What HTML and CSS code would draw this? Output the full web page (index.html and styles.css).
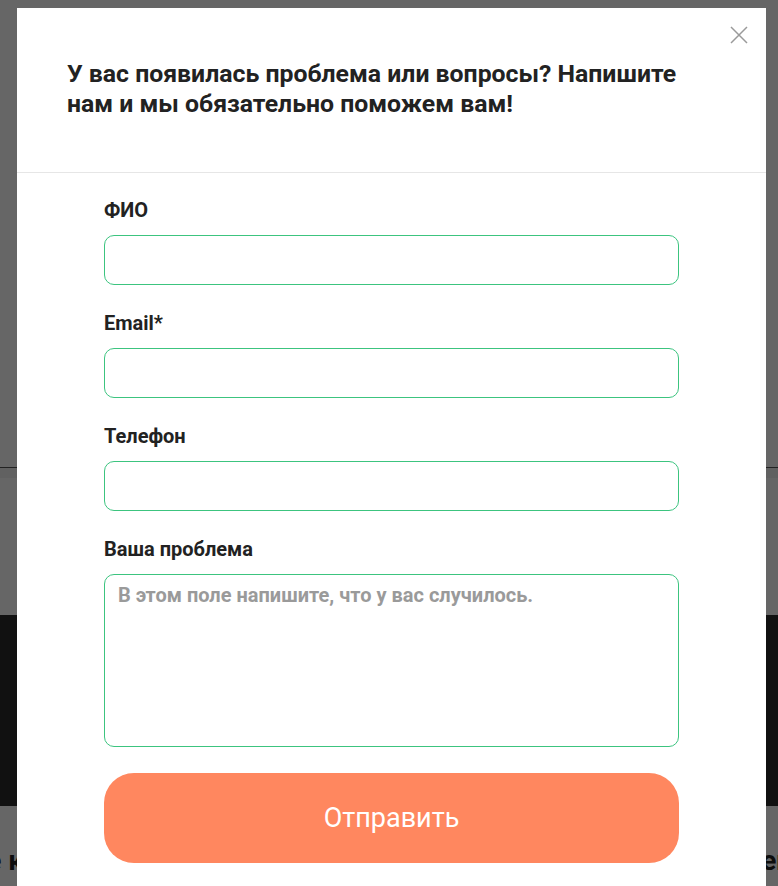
FILE: index.html
```html
<!DOCTYPE html>
<html lang="ru">
<head>
    <meta charset="UTF-8">
    <meta name="viewport" content="width=device-width, initial-scale=1.0">
    <title>Обратная связь</title>
    <link rel="stylesheet" href="styles.css">
</head>
<body>
    <div class="page">
        <div class="page-top"></div>
        <div class="page-strip"></div>
        <div class="page-mid"></div>
        <div class="page-dark"></div>
        <div class="page-bottom">
            <h2 class="page-title">лучшие клиники и специалисты вашего города с отзывами пациентов ил</h2>
        </div>
    </div>

    <div class="overlay"></div>

    <div class="modal">
        <button class="modal-close" aria-label="Закрыть">
            <svg width="18" height="18" viewBox="0 0 18 18">
                <path d="M1 1 L17 17 M17 1 L1 17" stroke="#9a9a9a" stroke-width="1.5" fill="none"/>
            </svg>
        </button>
        <div class="modal-header">
            <h3>У вас появилась проблема или вопросы? Напишите нам и мы обязательно поможем вам!</h3>
        </div>
        <form class="modal-form">
            <label class="field-label" for="fio">ФИО</label>
            <input class="field" type="text" id="fio">

            <label class="field-label" for="email">Email*</label>
            <input class="field" type="email" id="email">

            <label class="field-label" for="phone">Телефон</label>
            <input class="field" type="tel" id="phone">

            <label class="field-label" for="problem">Ваша проблема</label>
            <textarea class="field field-area" id="problem" placeholder="В этом поле напишите, что у вас случилось."></textarea>

            <button class="submit" type="button">Отправить</button>
        </form>
    </div>
</body>
</html>
```

FILE: styles.css
```css
body {
    font-family: Roboto, "Liberation Sans", sans-serif;
    margin: 0;
    background: #fff;
    color: #222;
    overflow: hidden;
}
.page {
    min-height: 100vh;
}
.page-top {
    height: 467px;
    background: #fff;
    border-bottom: 1px solid #555;
}
.page-strip {
    height: 10px;
    background: #f2f2f2;
}
.page-mid {
    height: 137px;
    background: #fff;
}
.page-dark {
    height: 191px;
    background: #2b2b2b;
}
.page-bottom {
    height: 200px;
    background: #fff;
    overflow: hidden;
    display: flex;
    justify-content: center;
}
.page-title {
    flex-shrink: 0;
    margin: 38px 0 0;
    font-size: 28px;
    font-weight: 700;
    white-space: nowrap;
    color: #222;
}
.overlay {
    position: fixed;
    inset: 0;
    background: rgba(0, 0, 0, 0.6);
}
.modal {
    position: absolute;
    top: 8px;
    left: 17px;
    width: 749px;
    background: #fff;
}
.modal-close {
    position: absolute;
    top: 18px;
    right: 18px;
    width: 18px;
    height: 18px;
    padding: 0;
    border: none;
    background: none;
    cursor: pointer;
}
.modal-header {
    padding: 51px 50px 53px;
    border-bottom: 1px solid #e6e6e6;
}
.modal-header h3 {
    margin: 0;
    font-size: 24.8px;
    line-height: 30px;
    font-weight: 700;
    color: #222;
    max-width: 625px;
}
.modal-form {
    display: flex;
    flex-direction: column;
    padding: 25px 87px 40px;
}
.field-label {
    font-size: 20px;
    line-height: 24px;
    font-weight: 700;
    margin-bottom: 13px;
}
.field {
    height: 50px;
    box-sizing: border-box;
    border: 1px solid #3cc47f;
    border-radius: 10px;
    padding: 0 14px;
    margin-bottom: 26px;
    font-family: inherit;
    font-size: 20px;
    outline: none;
}
.field-area {
    height: 173px;
    padding: 8px 13px;
    resize: none;
}
.field-area::placeholder {
    color: #9a9a9a;
    font-weight: 700;
}
.submit {
    height: 90px;
    border: none;
    border-radius: 30px;
    background: #ff875f;
    color: #fff;
    font-family: inherit;
    font-size: 27px;
    cursor: pointer;
}
```
